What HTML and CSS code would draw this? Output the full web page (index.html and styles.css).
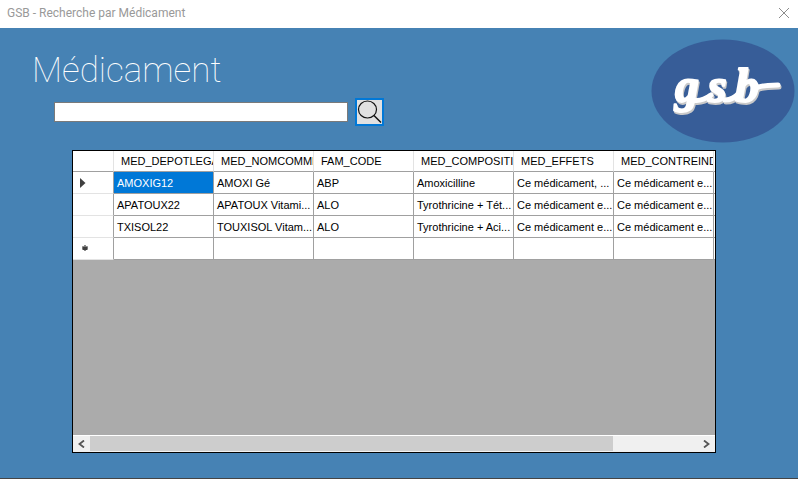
FILE: index.html
```html
<!DOCTYPE html>
<html lang="fr">
<head>
<meta charset="utf-8">
<title>GSB - Recherche par Médicament</title>
<link rel="stylesheet" href="styles.css">
</head>
<body>
<div class="window">
  <header class="titlebar">
    <span>GSB - Recherche par Médicament</span>
    <button class="close" type="button" aria-label="Fermer">
      <svg width="12" height="12" viewBox="0 0 12 12"><path d="M1 1L11 11M11 1L1 11" fill="none" stroke="#8c8c8c" stroke-width="1"/></svg>
    </button>
  </header>
  <main class="content">
    <div class="top">
      <div class="intro">
        <h1 id="title">Médicament</h1>
        <form class="search">
          <input class="query" type="text" aria-labelledby="title">
          <button class="go" type="button" aria-label="Rechercher">
            <svg width="25" height="24" viewBox="0 0 25 24" fill="none" stroke="#111"><ellipse cx="10.500" cy="9.500" rx="9" ry="8.500" stroke-width="1.200"/><path d="M17 15.500L24 22.500" stroke-width="1.500"/></svg>
          </button>
        </form>
      </div>
      <svg class="logo" width="144" height="104" viewBox="0 0 144 104" role="img" aria-label="gsb">
        <ellipse cx="72" cy="52" rx="71.500" ry="51.500" fill="#375d98"/>
        <g class="mark">
          <text x="24" y="63">g</text><text x="57" y="63">s</text><text x="84" y="63">b</text>
          <path d="M42 61Q50 63 60 56M74 61Q82 61 88 54M104 50Q108 46 127 46"/>
        </g>
      </svg>
    </div>
    <section class="grid">
      <div class="view">
        <table>
          <colgroup><col class="handle"><col><col><col><col><col><col><col class="next"></colgroup>
          <thead>
            <tr><th></th><th>MED_DEPOTLEGAL</th><th>MED_NOMCOMMERCIAL</th><th>FAM_CODE</th><th>MED_COMPOSITION</th><th>MED_EFFETS</th><th>MED_CONTREINDIC</th><th></th></tr>
          </thead>
          <tbody>
            <tr><th><svg width="6" height="10" viewBox="0 0 6 10"><path d="M0 0L5.500 5L0 10Z" fill="#404040"/></svg></th><td class="selected">AMOXIG12</td><td>AMOXI Gé</td><td>ABP</td><td>Amoxicilline</td><td>Ce médicament, ...</td><td>Ce médicament e...</td><td></td></tr>
            <tr><th></th><td>APATOUX22</td><td>APATOUX Vitami...</td><td>ALO</td><td>Tyrothricine + Tét...</td><td>Ce médicament e...</td><td>Ce médicament e...</td><td></td></tr>
            <tr><th></th><td>TXISOL22</td><td>TOUXISOL Vitam...</td><td>ALO</td><td>Tyrothricine + Aci...</td><td>Ce médicament e...</td><td>Ce médicament e...</td><td></td></tr>
            <tr><th><svg width="10" height="8" viewBox="0 0 10 8"><path d="M5 0V6M2.500 1.500L7.500 4.500M7.500 1.500L2.500 4.500M2 3H8" stroke="#404040" stroke-width="1.200"/></svg></th><td></td><td></td><td></td><td></td><td></td><td></td><td></td></tr>
          </tbody>
        </table>
      </div>
      <div class="scrollbar">
        <button type="button" aria-label="Défiler à gauche"><svg width="7" height="8" viewBox="0 0 7 8"><path d="M6 .5L1.500 4L6 7.500" fill="none" stroke="#555" stroke-width="1.800"/></svg></button>
        <div class="track"><div class="thumb"></div></div>
        <button type="button" aria-label="Défiler à droite"><svg width="7" height="8" viewBox="0 0 7 8"><path d="M1 .5L5.500 4L1 7.500" fill="none" stroke="#555" stroke-width="1.800"/></svg></button>
      </div>
    </section>
  </main>
</div>
</body>
</html>
```
FILE: styles.css
```css
* { box-sizing: border-box; }
body { margin: 0; font-family: "Liberation Sans", Arial, sans-serif; font-size: 11px; color: #000; }
button { padding: 0; border: 0; background: none; }
svg { display: block; }
.window { min-height: 100vh; display: flex; flex-direction: column; background: #4682b4; border-bottom: 1px solid #444; }
.titlebar { height: 28px; display: flex; justify-content: space-between; align-items: center; padding: 0 8px 3px 7px; background: #fff; color: #999; font-family: Roboto, sans-serif; font-size: 12px; }
.content { flex: 1; display: flex; flex-direction: column; padding: 11px 82px 25px 72px; }
.top { display: flex; justify-content: space-between; margin: 0 -79px 7px -40px; }
.intro { padding-top: 11px; }
h1 { margin: 0; font-family: Roboto, sans-serif; font-weight: 100; font-size: 35px; line-height: 42px; color: #fff; }
.search { display: flex; align-items: center; gap: 7px; margin: 6px 0 0 22px; }
.query { width: 294px; height: 20px; border: 1px solid #7a7a7a; background: #fff; padding: 0 4px; }
.go { width: 29px; height: 28px; border: 2px solid #0078d7; background: #e1e1e1; }
.mark { fill: #fff; stroke: #fff; stroke-linejoin: round; filter: drop-shadow(1px 2px 0 #c9c9c9); }
.mark text { font: italic 700 48px "Liberation Serif", serif; stroke-width: 2px; }
.mark path { fill: none; stroke-width: 5px; stroke-linecap: round; }
.grid { flex: 1; display: flex; flex-direction: column; border: 1px solid #000; background: #ababab; }
.view { flex: 1; overflow: hidden; }
table { width: 100%; table-layout: fixed; border-collapse: separate; border-spacing: 0; background: #fff; }
col { width: 100px; }
.handle { width: 41px; }
.next { width: auto; }
th, td { height: 22px; padding: 0 0 0 3px; border-right: 1px solid #a0a0a0; border-bottom: 1px solid #a0a0a0; font-weight: 400; text-align: left; white-space: nowrap; overflow: hidden; line-height: 16px; }
thead th { height: 21px; padding-left: 7px; border-right-color: #e3e3e3; }
tbody th { padding-left: 7px; border-bottom-color: #e3e3e3; }
tr > :last-child { border-right: 0; padding: 0; }
.selected { background: #0078d7; color: #fff; }
.scrollbar { display: flex; height: 17px; border-top: 1px solid #fff; background: #f0f0f0; }
.scrollbar button { width: 17px; display: flex; align-items: center; justify-content: center; }
.track { flex: 1; }
.thumb { width: 86%; height: 15px; background: #cdcdcd; }
```
